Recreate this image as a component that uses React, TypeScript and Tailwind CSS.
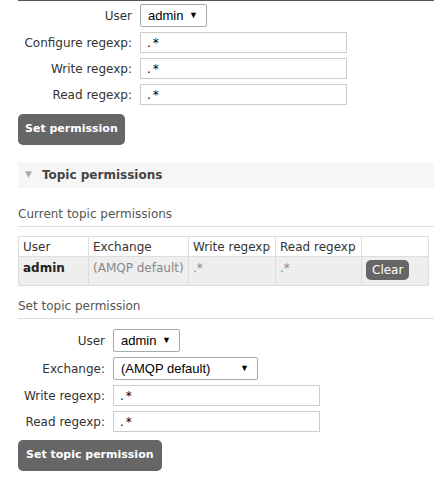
import React from 'react';

const font = { fontFamily: '"DejaVu Sans", Verdana, sans-serif' };

function Select({ value, width }: { value: string; width: string }) {
  return (
    <div
      className={`h-[23px] ${width} border border-[#a9a9a9] rounded-[2px] bg-white flex items-center justify-between pl-[7px] pr-[8px] text-[13px] text-black`}
      style={{ fontFamily: '"Liberation Sans", Arial, sans-serif' }}
    >
      <span>{value}</span>
      <span className="text-[9px]">▼</span>
    </div>
  );
}

function Input({ width }: { width: string }) {
  return (
    <div className={`h-[21px] ${width} border border-[#ccc] bg-white flex items-center pl-[6px] text-[12px] text-black`}>
      <span className="tracking-[2px]">.*</span>
    </div>
  );
}

function Row({ label, labelW, children, top }: { label: string; labelW: string; children: React.ReactNode; top?: boolean }) {
  return (
    <div className={`flex ${top ? 'items-start' : 'items-center'}`}>
      <div className={`${labelW} shrink-0 text-right pr-[8px] text-[12px] text-[#333] ${top ? 'pt-[3px]' : ''}`}>{label}</div>
      {children}
    </div>
  );
}

export default function App() {
  return (
    <div className="w-[434px] h-[477px] bg-white overflow-hidden" style={font}>
      <div className="ml-[18px] h-[1px] bg-[#555]" />

      {/* Permissions form */}
      <div className="pt-[3px] flex flex-col gap-[5px]">
        <Row label="User" labelW="w-[140px]" top>
          <Select value="admin" width="w-[67px]" />
        </Row>
        <Row label="Configure regexp:" labelW="w-[140px]">
          <Input width="w-[207px]" />
        </Row>
        <Row label="Write regexp:" labelW="w-[140px]">
          <Input width="w-[207px]" />
        </Row>
        <Row label="Read regexp:" labelW="w-[140px]">
          <Input width="w-[207px]" />
        </Row>
      </div>
      <button className="block ml-[18px] mt-[9px] h-[31px] px-[7px] rounded-[5px] bg-[#666] text-white text-[11px] font-bold">
        Set permission
      </button>

      {/* Topic permissions section */}
      <div className="ml-[18px] mt-[17px] h-[26px] bg-[#f6f6f6] flex items-center gap-[10px] pl-[7px]">
        <span className="text-[#aaa] text-[9px]">▼</span>
        <span className="text-[12px] font-bold text-[#444]">Topic permissions</span>
      </div>

      <div className="ml-[18px] mt-[17px] pb-[3px] border-b border-[#ddd] text-[12px] text-[#555]">
        Current topic permissions
      </div>

      <table className="ml-[18px] mt-[9px] w-[411px] border-collapse text-[12px]">
        <tbody>
          <tr className="h-[20px] bg-white text-[#333]">
            <td className="w-[70px] border border-[#ddd] px-[4px]">User</td>
            <td className="w-[100px] border border-[#ddd] px-[4px]">Exchange</td>
            <td className="w-[87px] border border-[#ddd] px-[4px]">Write regexp</td>
            <td className="w-[86px] border border-[#ddd] px-[4px]">Read regexp</td>
            <td className="border border-[#ddd]" />
          </tr>
          <tr className="h-[29px] bg-[#eee] align-top">
            <td className="border border-[#ddd] px-[4px] pt-[2px] font-bold text-[#222]">admin</td>
            <td className="border border-[#ddd] px-[4px] pt-[2px] text-[#888]">(AMQP default)</td>
            <td className="border border-[#ddd] px-[4px] pt-[2px] text-[#888]">.*</td>
            <td className="border border-[#ddd] px-[4px] pt-[2px] text-[#888]">.*</td>
            <td className="border border-[#ddd] pl-[4px] pt-[3px]">
              <span className="inline-flex h-[20px] px-[6px] items-center rounded-[5px] bg-[#666] text-white text-[12px]">Clear</span>
            </td>
          </tr>
        </tbody>
      </table>

      <div className="ml-[18px] mt-[11px] pb-[3px] border-b border-[#ddd] text-[12px] text-[#555]">
        Set topic permission
      </div>

      {/* Topic permission form */}
      <div className="pt-[10px] flex flex-col gap-[5px]">
        <Row label="User" labelW="w-[113px]" top>
          <Select value="admin" width="w-[67px]" />
        </Row>
        <Row label="Exchange:" labelW="w-[113px]">
          <Select value="(AMQP default)" width="w-[145px]" />
        </Row>
        <Row label="Write regexp:" labelW="w-[113px]">
          <Input width="w-[207px]" />
        </Row>
        <Row label="Read regexp:" labelW="w-[113px]">
          <Input width="w-[207px]" />
        </Row>
      </div>
      <button className="block ml-[18px] mt-[8px] h-[31px] px-[8px] rounded-[5px] bg-[#666] text-white text-[11px] font-bold">
        Set topic permission
      </button>
    </div>
  );
}
